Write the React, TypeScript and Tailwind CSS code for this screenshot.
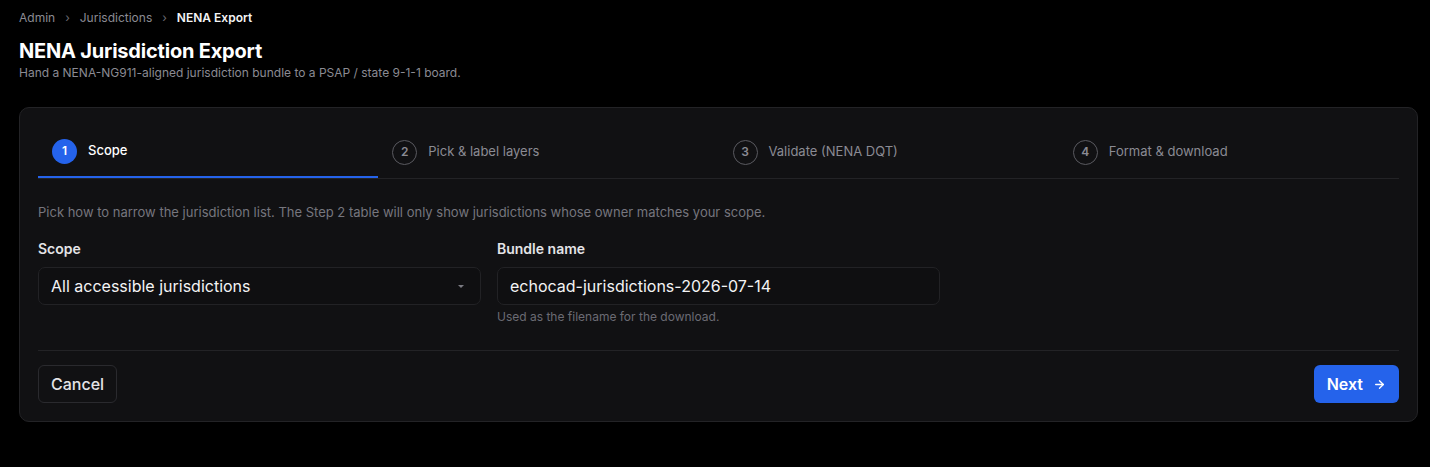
import React from "react";

const steps = [
  { n: 1, label: "Scope", active: true },
  { n: 2, label: "Pick & label layers" },
  { n: 3, label: "Validate (NENA DQT)" },
  { n: 4, label: "Format & download" },
];

export default function App() {
  return (
    <div
      className="min-h-[467px] bg-black text-white pl-[19px] pr-[12px] pt-[10px]"
      style={{ fontFamily: "Inter, 'Noto Sans', sans-serif" }}
    >
      <nav className="flex items-center gap-[10px] text-[12px] leading-[16px] text-[#8b8b93]">
        <span>Admin</span>
        <span className="text-[#6b6b73]">›</span>
        <span>Jurisdictions</span>
        <span className="text-[#6b6b73]">›</span>
        <span className="text-[#f4f4f5] font-semibold">NENA Export</span>
      </nav>
      <h1 className="mt-[12px] text-[20px] leading-[26px] font-bold tracking-[-0.2px]">NENA Jurisdiction Export</h1>
      <p className="mt-[2px] text-[12px] leading-[14px] text-[#8b8b93]">
        Hand a NENA-NG911-aligned jurisdiction bundle to a PSAP / state 9-1-1 board.
      </p>

      <div className="mt-[27px] rounded-[10px] border border-[#232326] bg-[#111113] px-[18px] pt-[18px] pb-[18px]">
        <div className="grid grid-cols-4 border-b border-[#232326]">
          {steps.map((s) => (
            <div
              key={s.n}
              className={`flex items-center gap-[11px] pl-[14px] h-[52px] ${
                s.active ? "border-b-2 border-[#2563eb] -mb-px" : ""
              }`}
            >
              <span
                className={`flex h-[25px] w-[25px] items-center justify-center rounded-full text-[12px] font-semibold ${
                  s.active ? "bg-[#2563eb] text-white" : "border border-[#5a5a60] text-[#8b8b93]"
                }`}
              >
                {s.n}
              </span>
              <span className={`text-[13px] ${s.active ? "text-white font-medium" : "text-[#8b8b93]"}`}>{s.label}</span>
            </div>
          ))}
        </div>

        <p className="mt-[25px] text-[13px] leading-[16px] text-[#76767e]">
          Pick how to narrow the jurisdiction list. The Step 2 table will only show jurisdictions whose owner matches your scope.
        </p>

        <div className="mt-[20px] grid grid-cols-3 gap-4">
          <div>
            <div className="text-[14px] leading-[17px] font-semibold text-[#e4e4e7]">Scope</div>
            <div className="mt-[10px] flex h-[38px] items-center justify-between rounded-[7px] border border-[#222225] bg-[#0f0f11] pl-[12px] pr-[16px]">
              <span className="text-[16px] text-[#f4f4f5]">All accessible jurisdictions</span>
              <svg width="6" height="3" viewBox="0 0 6 3">
                <path d="M0 0 L6 0 L3 3 Z" fill="#7a7a82" />
              </svg>
            </div>
          </div>
          <div>
            <div className="text-[14px] leading-[17px] font-semibold text-[#e4e4e7]">Bundle name</div>
            <div className="mt-[10px] flex h-[38px] items-center rounded-[7px] border border-[#222225] bg-[#0f0f11] pl-[12px]">
              <span className="text-[16px] text-[#f4f4f5]">echocad-jurisdictions-2026-07-14</span>
            </div>
            <div className="mt-[4px] text-[12px] leading-[16px] text-[#6b6b73]">Used as the filename for the download.</div>
          </div>
          <div />
        </div>

        <div className="mt-[25px] border-t border-[#232326] pt-[14px] flex items-center justify-between">
          <button className="h-[38px] rounded-[6px] border border-[#2a2a2e] px-[12px] text-[16px] font-medium text-[#e4e4e7]">
            Cancel
          </button>
          <button className="flex h-[38px] items-center gap-[10px] rounded-[6px] bg-[#2563eb] px-[13px] text-[16px] font-semibold text-white">
            Next
            <svg width="13" height="13" viewBox="0 0 24 24" fill="none" stroke="white" strokeWidth="2.5" strokeLinecap="round" strokeLinejoin="round">
              <path d="M5 12h14" />
              <path d="M12 5l7 7-7 7" />
            </svg>
          </button>
        </div>
      </div>
    </div>
  );
}
